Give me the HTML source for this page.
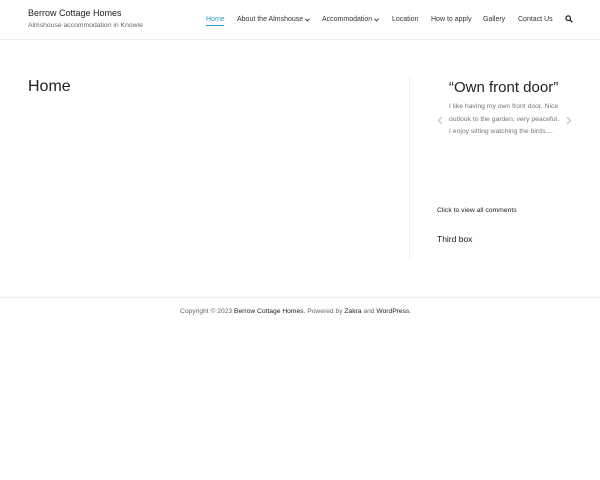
<!DOCTYPE html>
<html><head><style>
*{margin:0;padding:0;box-sizing:border-box}
body{width:600px;height:480px;background:#fff;font-family:"Liberation Sans",sans-serif;color:#222;position:relative;overflow:hidden}
.a{position:absolute;white-space:nowrap}
</style></head><body>
<div class="a" style="left:28px;top:8px;font-size:9px;color:#222">Berrow Cottage Homes</div>
<div class="a" style="left:28px;top:22px;font-size:6.8px;color:#666">Almshouse accommodation in Knowle</div>
<div class="a" style="top:16px;left:0;font-size:7px;color:#333">
<span class="a" style="left:206px;color:#269bd1">Home</span>
<span class="a" style="left:206px;top:9px;width:18px;height:1px;background:#269bd1"></span>
<span class="a" style="left:237px">About the Almshouse</span>
<svg class="a" style="left:305px;top:2px" width="5" height="4" viewBox="0 0 5 4"><path d="M0.5 0.8L2.5 2.8L4.5 0.8" fill="none" stroke="#333" stroke-width="1"/></svg>
<span class="a" style="left:322px">Accommodation</span>
<svg class="a" style="left:374px;top:2px" width="5" height="4" viewBox="0 0 5 4"><path d="M0.5 0.8L2.5 2.8L4.5 0.8" fill="none" stroke="#333" stroke-width="1"/></svg>
<span class="a" style="left:392px">Location</span>
<span class="a" style="left:431px">How to apply</span>
<span class="a" style="left:483px">Gallery</span>
<span class="a" style="left:518px">Contact Us</span>
</div>
<svg class="a" style="left:565px;top:15px" width="8" height="8" viewBox="0 0 8 8"><circle cx="3.2" cy="3.2" r="2.3" fill="none" stroke="#222" stroke-width="1.2"/><line x1="5" y1="5" x2="7.3" y2="7.3" stroke="#222" stroke-width="1.4"/></svg>
<div class="a" style="left:0;top:39px;width:600px;height:1px;background:#eee"></div>
<div class="a" style="left:28px;top:78px;font-size:16px;color:#222">Home</div>
<div class="a" style="left:409px;top:76px;width:1px;height:184px;background:#f0f0f0"></div>
<div class="a" style="left:449px;top:79px;font-size:15px;color:#222">“Own front door”</div>
<div class="a" style="left:449px;top:101px;font-size:6.8px;color:#777;line-height:12.5px">I like having my own front door. Nice<br>outlook to the garden, very peaceful.<br>I enjoy sitting watching the birds....</div>
<svg class="a" style="left:437px;top:116px" width="6" height="9" viewBox="0 0 6 9"><path d="M5 1L1.5 4.5L5 8" fill="none" stroke="#ccc" stroke-width="1.5"/></svg>
<svg class="a" style="left:566px;top:116px" width="6" height="9" viewBox="0 0 6 9"><path d="M1 1L4.5 4.5L1 8" fill="none" stroke="#ccc" stroke-width="1.5"/></svg>
<div class="a" style="left:437px;top:207px;font-size:6.8px;color:#222">Click to view all comments</div>
<div class="a" style="left:437px;top:234px;font-size:8.5px;color:#222">Third box</div>
<div class="a" style="left:0;top:297px;width:600px;height:1px;background:#eee"></div>
<div class="a" style="left:180px;top:308px;font-size:6.7px;color:#666">Copyright © 2023 <span style="color:#222">Berrow Cottage Homes</span>. Powered by <span style="color:#222">Zakra</span> and <span style="color:#222">WordPress</span>.</div>
</body></html>
